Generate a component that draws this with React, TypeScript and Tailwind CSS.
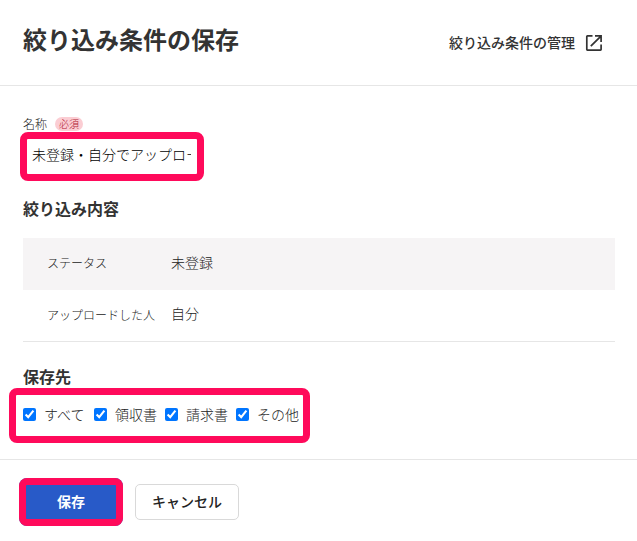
import { useState } from "react";

const conditions = [
  { label: "ステータス", value: "未登録" },
  { label: "アップロードした人", value: "自分" },
];

const destinations = ["すべて", "領収書", "請求書", "その他"];

function OpenInNewIcon() {
  return (
    <svg
      viewBox="0 0 18 18"
      className="mt-px h-[18px] w-[18px] shrink-0"
      fill="none"
      stroke="currentColor"
      strokeWidth="1.7"
    >
      <path d="M7.5 1.9H2.4a.6.6 0 0 0-.6.6v13.1a.6.6 0 0 0 .6.6h13.1a.6.6 0 0 0 .6-.6v-5.1" />
      <path d="M10 1.9h6.1V8M15.7 2.3 5.8 12.2" />
    </svg>
  );
}

function Checkbox({ label }: { label: string }) {
  const [checked, setChecked] = useState(true);

  return (
    <label className="flex w-[71px] items-center">
      <input
        type="checkbox"
        checked={checked}
        onChange={(e) => setChecked(e.target.checked)}
        className="h-[13px] w-[13px] shrink-0"
      />
      <span className="ml-2 text-sm leading-5 whitespace-nowrap text-[#222]">{label}</span>
    </label>
  );
}

export default function App() {
  const [name, setName] = useState("未登録・自分でアップロード");

  return (
    <div className="h-[541px] w-[637px] overflow-hidden bg-white font-['Noto_Sans_CJK_JP',sans-serif] font-light text-[#333]">
      {/* Header */}
      <header className="flex h-[86px] items-center justify-between border-b border-[#e6e6e6] pr-[34px] pb-[7px] pl-[23px]">
        <h1 className="text-2xl leading-8 font-bold">絞り込み条件の保存</h1>
        <a href="#" className="mt-1.5 flex items-center gap-2.5 text-sm font-medium">
          絞り込み条件の管理
          <OpenInNewIcon />
        </a>
      </header>

      <main className="h-[373px] px-[23px] pt-[30px]">
        {/* Name */}
        <div className="flex h-4 items-center">
          <span className="text-xs leading-4 text-[#222]">名称</span>
          <span className="ml-2 flex h-3.5 w-7 items-center justify-center rounded-full bg-[#fbcdd3] pb-px text-[10px] leading-none text-[#b01830]">
            必須
          </span>
        </div>
        <div className="relative h-[49px] w-[177px]">
          <input
            value={name}
            onChange={(e) => setName(e.target.value)}
            className="h-full w-[168px] pb-[5px] pl-[9px] text-sm text-black outline-none"
          />
          <div className="pointer-events-none absolute inset-y-0 right-[-4px] left-[-3px] rounded-lg border-[7px] border-[#ff0a5b]" />
        </div>

        {/* Conditions */}
        <h2 className="mt-[15px] text-base leading-6 font-bold">絞り込み内容</h2>
        <dl className="mt-[18px] w-[592px] border-b border-[#e6e6e6] text-[#222]">
          {conditions.map((row) => (
            <div
              key={row.label}
              className="flex h-[51px] items-center pb-[3px] pl-6 first:h-[52px] first:bg-[#f6f4f5]"
            >
              <dt className="w-[124px] pt-px text-xs">{row.label}</dt>
              <dd className="pb-0.5 text-sm">{row.value}</dd>
            </div>
          ))}
        </dl>

        {/* Destinations */}
        <h2 className="mt-[22px] text-base leading-6 font-bold">保存先</h2>
        <div className="relative -ml-3.5 flex h-[55px] w-[301px] items-center pb-[3px] pl-3.5">
          {destinations.map((label) => (
            <Checkbox key={label} label={label} />
          ))}
          <div className="pointer-events-none absolute inset-0 rounded-lg border-[7px] border-[#ff0a5b]" />
        </div>
      </main>

      {/* Footer */}
      <footer className="flex h-[82px] items-center gap-3 border-t border-[#e6e6e6] pl-[19px]">
        <button className="relative mt-[3px] h-12 w-[104px] rounded-lg bg-[#285ac8] pb-0.5 text-sm font-bold text-white">
          保存
          <span className="pointer-events-none absolute inset-0 rounded-lg border-[7px] border-[#ff0a5b]" />
        </button>
        <button className="mt-[3px] h-9 w-[104px] rounded-[5px] border border-[#d9d9d9] bg-white pb-0.5 text-sm font-medium text-[#222]">
          キャンセル
        </button>
      </footer>
    </div>
  );
}
